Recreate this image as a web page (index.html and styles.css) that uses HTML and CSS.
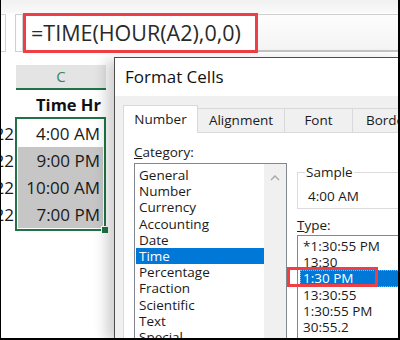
FILE: index.html
```html
<!DOCTYPE html>
<html>
<head>
<meta charset="utf-8">
<link rel="stylesheet" href="styles.css">
</head>
<body>
<div class="frame">
  <div class="fbar">
    <div class="fbar-row">
      <div class="fbox fbox-a"></div>
      <div class="fbox fbox-b"></div>
      <div class="formula">=TIME(HOUR(A2),0,0)</div>
      <div class="finput"></div>
    </div>
  </div>
  <div class="main">
    <div class="sheet">
      <div class="col-a">
        <div class="a-spacer"></div>
        <div class="cell-a"><span>2022</span></div>
        <div class="cell-a"><span>2022</span></div>
        <div class="cell-a"><span>2022</span></div>
        <div class="cell-a"><span>2022</span></div>
      </div>
      <div class="col-c">
        <div class="col-hdr">C</div>
        <div class="cell cell-head">Time Hr</div>
        <div class="sel">
          <div class="cell cell-active">4:00 AM</div>
          <div class="sel-range">
            <div class="cell">9:00 PM</div>
            <div class="cell">10:00 AM</div>
            <div class="cell">7:00 PM</div>
          </div>
          <div class="fill-handle"></div>
        </div>
      </div>
    </div>
    <div class="dialog">
      <div class="dlg-title">Format Cells</div>
      <div class="dlg-body">
        <div class="tabs">
          <div class="tab tab-active">Number</div>
          <div class="tab tab-align">Alignment</div>
          <div class="tab tab-font">Font</div>
          <div class="tab tab-border">Border</div>
        </div>
        <div class="panel">
          <div class="panel-left">
            <div class="label"><u>C</u>ategory:</div>
            <div class="listbox">
              <div class="items">
                <div class="item">General</div>
                <div class="item">Number</div>
                <div class="item">Currency</div>
                <div class="item">Accounting</div>
                <div class="item">Date</div>
                <div class="item item-sel">Time</div>
                <div class="item">Percentage</div>
                <div class="item">Fraction</div>
                <div class="item">Scientific</div>
                <div class="item">Text</div>
                <div class="item">Special</div>
              </div>
              <div class="scrollbar">
                <svg class="chev" width="10" height="6" viewBox="0 0 10 6"><path d="M1 5 L5 1 L9 5" fill="none" stroke="#a6a6a6" stroke-width="1.3"/></svg>
              </div>
            </div>
          </div>
          <div class="panel-right">
            <fieldset class="sample">
              <legend>Sample</legend>
              <div class="sample-val">4:00 AM</div>
            </fieldset>
            <div class="label type-label"><u>T</u>ype:</div>
            <div class="typelist">
              <div class="titem">*1:30:55 PM</div>
              <div class="titem">13:30</div>
              <div class="titem titem-sel">1:30 PM<span class="mark"></span></div>
              <div class="titem">13:30:55</div>
              <div class="titem">1:30:55 PM</div>
              <div class="titem">30:55.2</div>
            </div>
          </div>
        </div>
      </div>
    </div>
  </div>
</div>
</body>
</html>
```
FILE: styles.css
```css
* { box-sizing: border-box; }
html, body { margin: 0; padding: 0; background: #fff; }
body { font-family: "Open Sans", "Noto Sans", sans-serif; color: #1a1a1a; }

.frame {
  width: 400px;
  height: 340px;
  overflow: hidden;
  border-left: 1px solid #000;
  border-right: 2px solid #000;
  border-bottom: 2px solid #000;
  background: #fff;
  position: relative;
}

/* formula bar */
.fbar {
  height: 57px;
  padding-top: 13px;
  background: linear-gradient(#f1f1f1 0, #f9f9f9 13px, #fff 13px);
}
.fbar-row { display: flex; height: 40px; }
.fbox { margin: 1px 0; background: #fff; border: 1px solid #d0d0d0; flex: none; }
.fbox-a { width: 5px; border-left: none; }
.fbox-b { width: 8px; margin-left: 9px; }
.formula {
  flex: none;
  width: 235px;
  height: 40px;
  border: 3px solid #ef3f44;
  padding-left: 5px;
  font-size: 21.5px;
  line-height: 34px;
  color: #2a2a2a;
  white-space: nowrap;
  background: #fff;
}
.finput {
  flex: 1;
  margin: 1px 0;
  border-top: 1px solid #cfcfcf;
  border-bottom: 2px solid #c4c4c4;
  background: linear-gradient(#fdfdfd, #f4f4f4);
}

/* main */
.main { display: flex; height: 281px; }

/* sheet */
.sheet { width: 113px; flex: none; display: flex; padding-top: 8px; }
.col-a { width: 13px; flex: none; }
.a-spacer { height: 55px; }
.cell-a {
  height: 27px;
  display: flex;
  justify-content: flex-end;
  align-items: flex-end;
  overflow: hidden;
  font-size: 17px;
  line-height: 20px;
  padding-bottom: 3px;
  white-space: nowrap;
}
.col-c { width: 91px; flex: none; margin-left: 1px; }
.col-hdr {
  height: 25px;
  background: #e4e4e4;
  border-bottom: 2px solid #217346;
  text-align: center;
  color: #3b8460;
  font-size: 15px;
  line-height: 23px;
  margin-left: 1px;
}
.cell {
  height: 27px;
  display: flex;
  justify-content: flex-end;
  align-items: flex-end;
  padding: 0 3px 3px 0;
  font-size: 17px;
  line-height: 20px;
  white-space: nowrap;
  color: #1a1a1a;
}
.cell-head { font-weight: 700; padding-right: 5px; padding-bottom: 2px; font-size: 16.5px; color: #111; }
.sel {
  position: relative;
  border: 2px solid #217346;
  padding: 1px;
  background: #fff;
}
.sel-range { background: #c6c6c6; }
.fill-handle {
  position: absolute;
  right: -5px;
  bottom: -5px;
  width: 8px;
  height: 8px;
  background: #217346;
  border: 1px solid #fff;
}

/* dialog */
.dialog {
  flex: none;
  width: 290px;
  background: #f0f0f0;
  border-left: 1px solid #4d4d4d;
  border-top: 1px solid #4d4d4d;
  box-shadow: -8px 3px 12px rgba(0,0,0,0.18);
  position: relative;
}
.dlg-title {
  height: 38px;
  background: #fff;
  padding-left: 10px;
  font-size: 17px;
  line-height: 38px;
  color: #111;
}
.dlg-body { padding: 9px 0 0 8px; }
.tabs { display: flex; align-items: flex-end; height: 27px; }
.tab {
  height: 24px;
  border: 1px solid #d9d9d9;
  border-left: none;
  border-bottom: none;
  background: #f0f0f0;
  font-size: 13.5px;
  line-height: 23px;
  text-align: center;
  color: #1a1a1a;
  flex: none;
}
.tab-active {
  width: 75px;
  height: 28px;
  background: #fff;
  border-left: 1px solid #d9d9d9;
  margin-bottom: -1px;
  position: relative;
  z-index: 1;
  line-height: 26px;
}
.tab-align { width: 87px; }
.tab-font { width: 68px; }
.tab-border { width: 70px; text-align: left; padding-left: 13px; }

.panel {
  background: #fff;
  border: 1px solid #d9d9d9;
  height: 260px;
  padding-left: 10px;
  display: flex;
}
.panel-left { width: 153px; flex: none; }
.label { font-size: 13.5px; line-height: 18px; color: #1a1a1a; }
.panel-left .label { margin-top: 10px; }
.listbox {
  margin-top: 2px;
  height: 200px;
  border: 1px solid #828790;
  display: flex;
}
.items { flex: 1; padding-top: 3px; }
.item {
  height: 16.2px;
  line-height: 16px;
  font-size: 13.5px;
  padding-left: 3px;
  margin-left: 1px;
  white-space: nowrap;
}
.item-sel { background: #0078d7; color: #fff; }
.scrollbar {
  width: 22px;
  background: #f0f0f0;
  display: flex;
  justify-content: center;
  padding-top: 11px;
}
.chev { display: block; }

.panel-right { flex: none; margin-left: 10px; padding-top: 30px; }
.sample {
  margin: 0;
  width: 200px;
  border: 1px solid #dcdcdc;
  padding: 0 0 3px 7px;
}
.sample legend {
  padding: 0 1px;
  font-size: 13.5px;
  line-height: 18px;
  color: #1a1a1a;
}
.sample-val { margin: 6px 0 0 3px; font-size: 13.5px; line-height: 18px; }
.type-label { margin-top: 7px; }
.typelist {
  margin-top: 1px;
  width: 200px;
  height: 120px;
  border: 1px solid #828790;
  padding-top: 2px;
}
.titem {
  height: 16.2px;
  line-height: 16px;
  font-size: 13.5px;
  padding-left: 3px;
  margin-left: 2px;
  white-space: nowrap;
}
.titem-sel {
  background: #0078d7;
  color: #fff;
  outline: 1px dotted #7fb8ea;
  outline-offset: -1px;
  position: relative;
}
.mark {
  position: absolute;
  left: -13px;
  top: -3px;
  width: 91px;
  height: 20px;
  border: 3px solid #ef3f44;
}
```
